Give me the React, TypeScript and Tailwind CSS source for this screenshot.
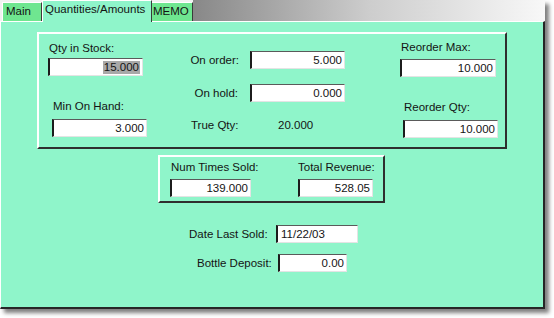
import type { ReactNode } from 'react';

interface FieldProps {
  value: string;
  width: string;
  left?: boolean;
  selected?: boolean;
}

function Field({ value, width, left, selected }: FieldProps) {
  return (
    <div
      className={`${width} h-[18px] bg-white border-l-2 border-t border-r border-b border-l-[#1c1c1c] border-t-[#5a5a5a] border-r-[#e4e4e4] border-b-[#e4e4e4] flex items-center ${left ? 'justify-start pl-[3px]' : 'justify-end pr-[2px]'}`}
    >
      <span className={`leading-[13px] ${selected ? 'bg-[#a8a8a8] px-[1px]' : ''}`}>{value}</span>
    </div>
  );
}

function Group({ className, children }: { className: string; children: ReactNode }) {
  return (
    <div
      className={`${className} border-2 border-t-white border-l-white border-r-[#2e2e2e] border-b-[#2e2e2e] flex items-start`}
    >
      {children}
    </div>
  );
}

export default function App() {
  return (
    <div
      className="w-[554px] h-[318px] bg-white text-[11.5px] text-[#141414] whitespace-nowrap"
      style={{ fontFamily: '"Liberation Sans", Arial, sans-serif' }}
    >
      <div className="w-[545px] h-[309px] flex flex-col shadow-[4px_4px_4px_rgba(0,0,0,0.5)]">
        {/* tab strip */}
        <div className="h-[21px] flex items-end bg-[#f2f2f2] shrink-0">
          <div className="ml-[2px] w-[40px] h-[19px] bg-[#6fe690] border-t border-l border-t-white border-l-white border-r border-r-[#3a3a3a] pl-[3px] leading-[17px]">
            Main
          </div>
          <div className="relative z-10 -mb-px w-[110px] h-[22px] bg-[#8ff5ca] border-t border-l border-t-white border-l-white border-r border-r-[#3a3a3a] pl-[2px] pt-[1px] leading-[14px]">
            Quantities/Amounts
          </div>
          <div className="w-[41px] h-[19px] bg-[#6fe690] border-t border-t-white border-r border-r-[#3a3a3a] pl-[1px] leading-[17px]">
            MEMO
          </div>
          <div className="flex-1 self-stretch bg-gradient-to-r from-[#888888] via-[#cdcdcd] to-[#f8f8f8]" />
        </div>

        {/* panel */}
        <div className="flex-1 bg-[#8ff5ca] border-t border-l border-t-white border-l-white border-r-2 border-b-2 border-r-[#262626] border-b-[#262626] flex flex-col">
          <Group className="ml-[36px] mt-[10px] w-[470px] h-[117px]">
            <div className="ml-[9px] w-[99px] flex flex-col">
              <div className="mt-[8px] pl-[1px] leading-[13px]">Qty in Stock:</div>
              <div className="mt-[3px]">
                <Field value="15.000" width="w-[95px]" selected />
              </div>
              <div className="mt-[24px] pl-[5px] leading-[13px]">Min On Hand:</div>
              <div className="mt-[6px] ml-[4px]">
                <Field value="3.000" width="w-[95px]" />
              </div>
            </div>

            <div className="ml-[38px] flex flex-col">
              <div className="mt-[17px] flex items-center">
                <div className="w-[54px] text-right leading-[13px]">On order:</div>
                <div className="ml-[11px]">
                  <Field value="5.000" width="w-[95px]" />
                </div>
              </div>
              <div className="mt-[15px] flex items-center">
                <div className="w-[53px] text-right leading-[13px]">On hold:</div>
                <div className="ml-[12px]">
                  <Field value="0.000" width="w-[95px]" />
                </div>
              </div>
              <div className="mt-[17px] flex items-center leading-[13px]">
                <div className="ml-[6px] w-[87px]">True Qty:</div>
                <div>20.000</div>
              </div>
            </div>

            <div className="ml-[55px] w-[98px] flex flex-col">
              <div className="mt-[7px] pl-[1px] leading-[13px]">Reorder Max:</div>
              <div className="mt-[5px]">
                <Field value="10.000" width="w-[96px]" />
              </div>
              <div className="mt-[24px] pl-[4px] leading-[13px]">Reorder Qty:</div>
              <div className="mt-[6px] ml-[3px]">
                <Field value="10.000" width="w-[95px]" />
              </div>
            </div>
          </Group>

          <Group className="ml-[157px] mt-[6px] w-[227px] h-[48px]">
            <div className="ml-[10px] w-[81px] flex flex-col">
              <div className="mt-[4px] pl-[1px] leading-[13px]">Num Times Sold:</div>
              <div className="mt-[5px]">
                <Field value="139.000" width="w-[81px]" />
              </div>
            </div>
            <div className="ml-[47px] flex flex-col">
              <div className="mt-[4px] leading-[13px]">Total Revenue:</div>
              <div className="mt-[5px]">
                <Field value="528.05" width="w-[75px]" />
              </div>
            </div>
          </Group>

          <div className="mt-[22px] ml-[188px] flex items-center">
            <div className="w-[80px] leading-[13px]">Date Last Sold:</div>
            <div className="ml-[7px]">
              <Field value="11/22/03" width="w-[82px]" left />
            </div>
          </div>

          <div className="mt-[11px] ml-[196px] flex items-center">
            <div className="w-[77px] leading-[13px]">Bottle Deposit:</div>
            <div className="ml-[4px]">
              <Field value="0.00" width="w-[69px]" />
            </div>
          </div>
        </div>
      </div>
    </div>
  );
}
